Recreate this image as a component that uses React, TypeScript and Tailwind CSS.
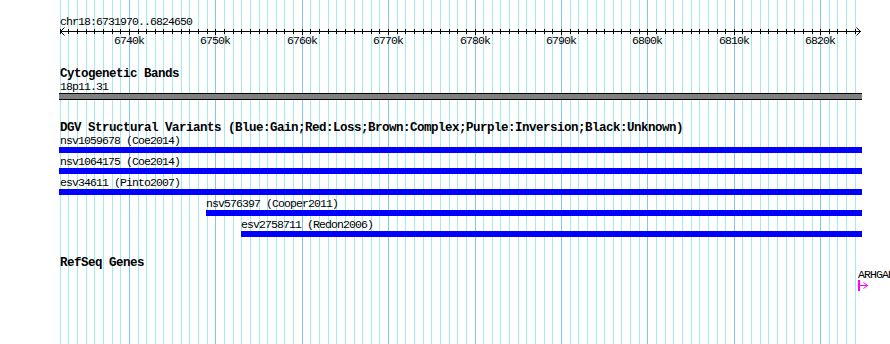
import React from "react";

const START = 6731970;
const BP_PER_PX = 115.72;
const LEFT = 60;

const toX = (pos: number) => Math.floor(LEFT + (pos - START) / BP_PER_PX);

interface Variant {
  name: string;
  source: string;
  left: number;
}

const variants: Variant[] = [
  { name: "nsv1059678", source: "Coe2014", left: 59 },
  { name: "nsv1064175", source: "Coe2014", left: 59 },
  { name: "esv34611", source: "Pinto2007", left: 59 },
  { name: "nsv576397", source: "Cooper2011", left: 206 },
  { name: "esv2758711", source: "Redon2006", left: 241 },
];

const kbs: number[] = [];
for (let k = 6732; k <= 6824; k++) kbs.push(k);

const RIGHT = 862;

const Grid: React.FC = () => (
  <svg
    className="absolute inset-0"
    width={890}
    height={344}
    shapeRendering="crispEdges"
  >
    {kbs.map((k) => (
      <rect
        key={k}
        x={toX(k * 1000)}
        y={0}
        width={1}
        height={344}
        fill={k % 10 === 0 ? "#7cc8f0" : "#a4eaf2"}
      />
    ))}
  </svg>
);

const Ruler: React.FC = () => (
  <svg width={890} height={48} className="block" shapeRendering="crispEdges">
    <text
      x={60}
      y={25}
      fontFamily="'Liberation Mono', monospace"
      fontSize={11.5}
      letterSpacing={-0.9}
      fill="#000"
    >
      chr18:6731970..6824650
    </text>
    <rect x={60} y={31} width={801} height={1} fill="#000" />
    {/* arrow heads */}
    <path d="M64.5 27.5 L60.5 31.5 L64.5 35.5" stroke="#000" fill="none" shapeRendering="auto" />
    <path d="M856.5 27.5 L860.5 31.5 L856.5 35.5" stroke="#000" fill="none" shapeRendering="auto" />
    {kbs.map((k) => {
      const x = toX(k * 1000);
      const major = k % 10 === 0;
      return (
        <g key={k}>
          <rect x={x} y={29} width={1} height={major ? 6 : 5} fill="#000" />
          {major && (
            <text
              x={x - 15}
              y={44}
              fontFamily="'Liberation Mono', monospace"
              fontSize={11.5}
              letterSpacing={-0.9}
              fill="#000"
            >
              {k}k
            </text>
          )}
        </g>
      );
    })}
  </svg>
);

const App: React.FC = () => {
  return (
    <div className="relative w-[890px] h-[344px] overflow-hidden bg-white text-black font-['Liberation_Mono',monospace]">
      <Grid />

      <div className="relative">
        <Ruler />

        {/* Cytogenetic bands */}
        <div className="mt-[20px] ml-[60px] h-[13px] leading-[13px] text-[12.5px] font-bold tracking-[-0.5px] whitespace-nowrap">
          Cytogenetic Bands
        </div>
        <div className="ml-[60px] h-[11px] leading-[11px] text-[11.5px] tracking-[-0.9px] whitespace-nowrap">
          18p11.31
        </div>
        <div className="mt-[1px] ml-[59px] w-[803px] h-[7px] border-y border-black bg-[#808080]" />

        {/* DGV */}
        <div className="mt-[22px] ml-[60px] h-[13px] leading-[13px] text-[12.5px] font-bold tracking-[-0.5px] whitespace-nowrap">
          DGV Structural Variants (Blue:Gain;Red:Loss;Brown:Complex;Purple:Inversion;Black:Unknown)
        </div>
        <div>
          {variants.map((v) => (
            <div key={v.name} className="mb-[3px]">
              <div
                className="h-[11px] leading-[11px] text-[11.5px] tracking-[-0.9px] whitespace-nowrap"
                style={{ marginLeft: v.left === 59 ? 60 : v.left }}
              >
                {v.name} ({v.source})
              </div>
              <div
                className="mt-[1px] h-[6px] bg-[#0000ff]"
                style={{ marginLeft: v.left, width: RIGHT - v.left }}
              />
            </div>
          ))}
        </div>

        {/* RefSeq */}
        <div className="mt-[20px] ml-[60px] h-[13px] leading-[13px] text-[12.5px] font-bold tracking-[-0.5px] whitespace-nowrap">
          RefSeq Genes
        </div>
        <div className="-mt-[1px] ml-[858px] h-[11px] leading-[11px] text-[11.5px] tracking-[-0.9px] whitespace-nowrap">
          ARHGAP
        </div>
        <svg width={12} height={12} className="block ml-[858px]" shapeRendering="crispEdges">
          <rect x={0} y={0} width={2} height={11} fill="#ff00ff" />
          <rect x={2} y={5} width={8} height={1} fill="#ff00ff" />
          <path d="M5.5 2.5 L9.5 5.5 L5.5 8.5" stroke="#ff00ff" fill="none" shapeRendering="auto" />
        </svg>
      </div>
    </div>
  );
};

export default App;
